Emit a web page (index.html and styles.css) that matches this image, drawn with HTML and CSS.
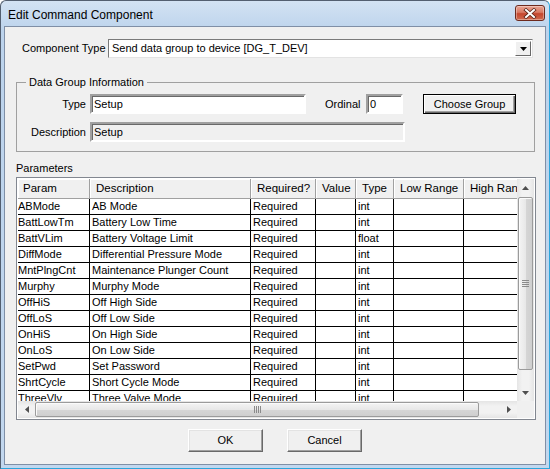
FILE: index.html
```html
<!DOCTYPE html>
<html>
<head>
<meta charset="utf-8">
<link rel="stylesheet" href="styles.css">
</head>
<body>
<div class="window">
  <div class="titlebar">
    <span class="title">Edit Command Component</span>
    <div class="close">
      <svg width="14" height="11" viewBox="0 0 14 11">
        <path d="M3 2 L11 9 M11 2 L3 9" stroke="#5a2418" stroke-width="3.6" stroke-linecap="square" fill="none"/>
        <path d="M3 2 L11 9 M11 2 L3 9" stroke="#ffffff" stroke-width="2" stroke-linecap="square" fill="none"/>
      </svg>
    </div>
  </div>
  <div class="client">
    <div class="combo-row">
      <span class="combo-label">Component Type</span>
      <div class="combo">
        <span class="combo-text">Send data group to device [DG_T_DEV]</span>
        <span class="combo-btn">
          <svg width="7" height="4" viewBox="0 0 7 4"><path d="M0 0 H7 L3.5 4 Z" fill="#000"/></svg>
        </span>
      </div>
    </div>

    <fieldset class="group">
      <legend>Data Group Information</legend>
      <div class="grow">
        <span class="glabel">Type</span>
        <div class="field type-field">Setup</div>
        <span class="ord-label">Ordinal</span>
        <div class="field ord-field">0</div>
        <div class="btn default-btn">Choose Group</div>
      </div>
      <div class="grow second">
        <span class="glabel">Description</span>
        <div class="field disabled desc-field">Setup</div>
      </div>
    </fieldset>

    <div class="params-label">Parameters</div>

    <div class="listview">
      <div class="lv-main">
        <div class="lv-view">
          <table class="grid">
            <colgroup>
              <col class="c1"><col class="c2"><col class="c3"><col class="c4"><col class="c5"><col class="c6"><col class="c7">
            </colgroup>
            <thead>
              <tr><th>Param</th><th>Description</th><th>Required?</th><th>Value</th><th>Type</th><th>Low Range</th><th>High Range</th></tr>
            </thead>
            <tbody>
              <tr><td>ABMode</td><td>AB Mode</td><td>Required</td><td></td><td>int</td><td></td><td></td></tr>
              <tr><td>BattLowTm</td><td>Battery Low Time</td><td>Required</td><td></td><td>int</td><td></td><td></td></tr>
              <tr><td>BattVLim</td><td>Battery Voltage Limit</td><td>Required</td><td></td><td>float</td><td></td><td></td></tr>
              <tr><td>DiffMode</td><td>Differential Pressure Mode</td><td>Required</td><td></td><td>int</td><td></td><td></td></tr>
              <tr><td>MntPlngCnt</td><td>Maintenance Plunger Count</td><td>Required</td><td></td><td>int</td><td></td><td></td></tr>
              <tr><td>Murphy</td><td>Murphy Mode</td><td>Required</td><td></td><td>int</td><td></td><td></td></tr>
              <tr><td>OffHiS</td><td>Off High Side</td><td>Required</td><td></td><td>int</td><td></td><td></td></tr>
              <tr><td>OffLoS</td><td>Off Low Side</td><td>Required</td><td></td><td>int</td><td></td><td></td></tr>
              <tr><td>OnHiS</td><td>On High Side</td><td>Required</td><td></td><td>int</td><td></td><td></td></tr>
              <tr><td>OnLoS</td><td>On Low Side</td><td>Required</td><td></td><td>int</td><td></td><td></td></tr>
              <tr><td>SetPwd</td><td>Set Password</td><td>Required</td><td></td><td>int</td><td></td><td></td></tr>
              <tr><td>ShrtCycle</td><td>Short Cycle Mode</td><td>Required</td><td></td><td>int</td><td></td><td></td></tr>
              <tr><td>ThreeVlv</td><td>Three Valve Mode</td><td>Required</td><td></td><td>int</td><td></td><td></td></tr>
            </tbody>
          </table>
        </div>
        <div class="vscroll">
          <div class="sb-btn">
            <svg width="7" height="4" viewBox="0 0 7 4"><path d="M0 4 H7 L3.5 0 Z" fill="#505050"/></svg>
          </div>
          <div class="vtrack">
            <div class="vthumb">
              <svg width="7" height="7" viewBox="0 0 7 7"><path d="M0 0.5 H7 M0 2.5 H7 M0 4.5 H7 M0 6.5 H7" stroke="#8a8a8a" stroke-width="1"/></svg>
            </div>
          </div>
          <div class="sb-btn">
            <svg width="7" height="4" viewBox="0 0 7 4"><path d="M0 0 H7 L3.5 4 Z" fill="#505050"/></svg>
          </div>
        </div>
      </div>
      <div class="lv-bottom">
        <div class="hscroll">
          <div class="sb-btn h">
            <svg width="4" height="7" viewBox="0 0 4 7"><path d="M4 0 V7 L0 3.5 Z" fill="#505050"/></svg>
          </div>
          <div class="htrack">
            <div class="hthumb">
              <svg width="7" height="7" viewBox="0 0 7 7"><path d="M0.5 0 V7 M2.5 0 V7 M4.5 0 V7 M6.5 0 V7" stroke="#8a8a8a" stroke-width="1"/></svg>
            </div>
          </div>
          <div class="sb-btn h">
            <svg width="4" height="7" viewBox="0 0 4 7"><path d="M0 0 V7 L4 3.5 Z" fill="#505050"/></svg>
          </div>
        </div>
        <div class="corner"></div>
      </div>
    </div>

    <div class="buttons">
      <div class="btn push">OK</div>
      <div class="btn push">Cancel</div>
    </div>
  </div>
</div>
</body>
</html>
```

FILE: styles.css
```css
* { box-sizing: border-box; }

html, body {
  margin: 0;
  padding: 0;
}

body {
  width: 550px;
  height: 469px;
  overflow: hidden;
  background: #ffffff;
  font-family: "Liberation Sans", Arial, sans-serif;
  font-size: 11px;
  color: #000;
}

.window {
  width: 550px;
  height: 469px;
  display: flex;
  flex-direction: column;
  background: linear-gradient(#d3e2f3, #bcd3ec 30px, #c2d7ee);
  border: 1px solid #535f70;
  border-right-color: #2ba6dc;
  border-bottom-color: #2ba6dc;
  border-radius: 6px 6px 0 0;
  padding: 0 3px 3px 3px;
}

.titlebar {
  height: 25px;
  flex: none;
  display: flex;
  align-items: flex-start;
  justify-content: space-between;
}

.title {
  font-size: 12px;
  line-height: 15px;
  margin-top: 7px;
  margin-left: 4px;
  color: #000;
}

.close {
  width: 30px;
  height: 16px;
  margin-top: 4px;
  margin-right: 1px;
  border: 1px solid #6d2a1e;
  border-radius: 3px;
  background: linear-gradient(#e9a493, #d97a64 45%, #c4462d 55%, #d06a4f);
  display: flex;
  align-items: center;
  justify-content: center;
  box-shadow: inset 0 0 0 1px rgba(255,255,255,0.35);
}

.client {
  flex: 1;
  background: #f0f0f0;
  border: 1px solid #7f8fa6;
  padding: 0 0 0 11px;
  display: flex;
  flex-direction: column;
}

/* combo row */
.combo-row {
  margin-top: 12px;
  display: flex;
  align-items: center;
  height: 19px;
}

.combo-label {
  margin-left: 6px;
  width: 86px;
  line-height: 13px;
}

.combo {
  width: 425px;
  height: 19px;
  background: #fff;
  border: 1px solid;
  border-color: #7a7a7a #e3e3e3 #e3e3e3 #7a7a7a;
  display: flex;
  align-items: center;
  justify-content: space-between;
}

.combo-text {
  padding-left: 3px;
  line-height: 13px;
}

.combo-btn {
  width: 16px;
  height: 15px;
  margin-right: 1px;
  background: #f0f0f0;
  border: 1px solid;
  border-color: #fff #696969 #696969 #fff;
  display: flex;
  align-items: center;
  justify-content: center;
}

/* group box */
.group {
  margin: 18px 0 0 0;
  padding: 0 0 9px 0;
  width: 519px;
  border: 1px solid #a0a0a0;
  min-width: 0;
}

.group legend {
  margin-left: 9px;
  padding: 0 3px;
  line-height: 13px;
}

.grow {
  display: flex;
  align-items: center;
  height: 20px;
  margin-top: 5px;
}

.grow.second {
  margin-top: 8px;
}

.glabel {
  width: 69px;
  text-align: right;
  margin-right: 4px;
  line-height: 13px;
}

.field {
  height: 20px;
  background: #fff;
  border: 2px solid;
  border-color: #a0a0a0 #ffffff #ffffff #a0a0a0;
  box-shadow: inset 1px 1px 0 #696969;
  padding: 0 0 0 2px;
  line-height: 16px;
}

.field.disabled {
  background: #f0f0f0;
}

.type-field { width: 216px; }
.ord-field { width: 37px; }
.desc-field { width: 315px; }

.ord-label {
  margin-left: 19px;
  width: 41px;
  line-height: 13px;
}

.btn {
  display: flex;
  align-items: center;
  justify-content: center;
  background: #f0f0f0;
  line-height: 13px;
}

.default-btn {
  margin-left: 20px;
  width: 93px;
  height: 20px;
  border: 1px solid #000;
  box-shadow: inset 1px 1px 0 #fff, inset -1px -1px 0 #696969, inset -2px -2px 0 #a0a0a0;
}

.push {
  width: 75px;
  height: 23px;
  border: 1px solid;
  border-color: #fff #696969 #696969 #fff;
  box-shadow: inset -1px -1px 0 #a0a0a0, inset 1px 1px 0 #e3e3e3;
}

.params-label {
  margin-top: 10px;
  line-height: 13px;
}

/* list view */
.listview {
  margin-top: 2px;
  width: 520px;
  height: 243px;
  border: 1px solid #828790;
  padding: 1px;
  background: #fff;
  display: flex;
  flex-direction: column;
}

.lv-main {
  flex: 1;
  display: flex;
  min-height: 0;
}

.lv-view {
  flex: 1;
  overflow: hidden;
  background: #fff;
}

.grid {
  table-layout: fixed;
  border-collapse: separate;
  border-spacing: 0;
  width: 521px;
}

.c1 { width: 72px; }
.c2 { width: 161px; }
.c3 { width: 65px; }
.c4 { width: 40px; }
.c5 { width: 38px; }
.c6 { width: 70px; }
.c7 { width: 75px; }

.grid th {
  height: 20px;
  padding: 0 0 0 5px;
  font-weight: normal;
  font-size: 11.5px;
  text-align: left;
  white-space: nowrap;
  overflow: hidden;
  background: #f0f0f0;
  border-right: 1px solid #a0a0a0;
  border-bottom: 1px solid #a0a0a0;
  box-shadow: inset 1px 1px 0 #fff;
  line-height: 13px;
}

.grid th + th {
  padding-left: 6px;
}

.grid td {
  height: 16px;
  padding: 0 0 0 2px;
  border-right: 1px solid #000;
  border-bottom: 1px solid #000;
  white-space: nowrap;
  overflow: hidden;
  line-height: 13px;
}

.grid td:first-child {
  padding-left: 0;
}

/* scrollbars */
.vscroll {
  width: 17px;
  display: flex;
  flex-direction: column;
  background: linear-gradient(90deg, #e5e5e5, #f2f2f2 30%, #f2f2f2 70%, #e5e5e5);
}

.sb-btn {
  width: 17px;
  height: 17px;
  flex: none;
  display: flex;
  align-items: center;
  justify-content: center;
}

.vtrack {
  flex: 1;
  padding-top: 1px;
}

.vthumb {
  margin-left: 1px;
  width: 15px;
  height: 173px;
  border: 1px solid #9b9b9b;
  border-radius: 2px;
  background: linear-gradient(90deg, #f4f4f4, #e8e8e8 50%, #d6d6d6 51%, #cfcfcf);
  box-shadow: inset 1px 1px 0 #fbfbfb;
  display: flex;
  align-items: center;
  justify-content: center;
}

.lv-bottom {
  height: 17px;
  flex: none;
  display: flex;
}

.hscroll {
  flex: 1;
  display: flex;
  background: linear-gradient(#e5e5e5, #f2f2f2 30%, #f2f2f2 70%, #e5e5e5);
}

.htrack {
  flex: 1;
  display: flex;
  align-items: center;
}

.hthumb {
  width: 444px;
  height: 15px;
  border: 1px solid #9b9b9b;
  border-radius: 2px;
  background: linear-gradient(#f4f4f4, #e8e8e8 50%, #d6d6d6 51%, #cfcfcf);
  box-shadow: inset 1px 1px 0 #fbfbfb;
  display: flex;
  align-items: center;
  justify-content: center;
}

.corner {
  width: 17px;
  background: #f0f0f0;
}

/* buttons */
.buttons {
  margin-top: 9px;
  display: flex;
  justify-content: center;
  gap: 24px;
  padding-right: 11px;
}
```
